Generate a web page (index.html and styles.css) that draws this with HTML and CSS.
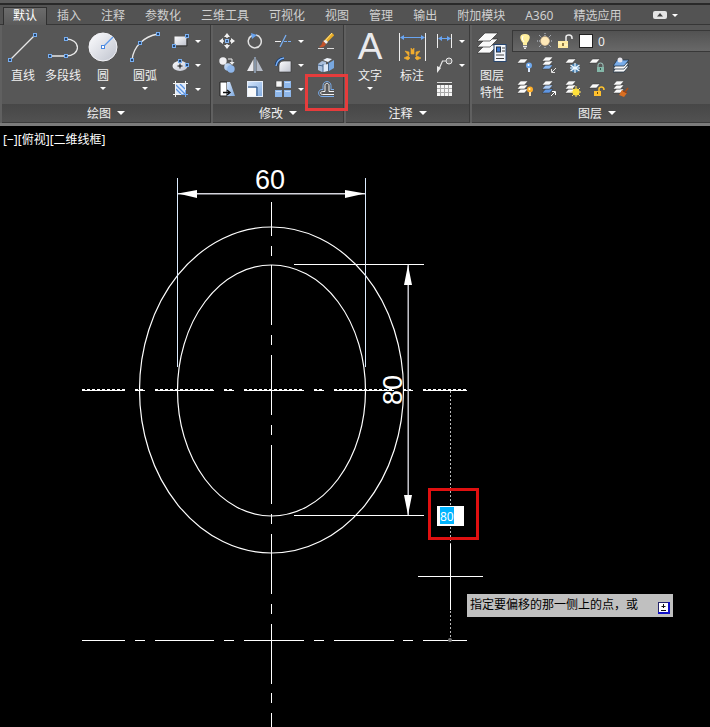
FILE: index.html
```html
<!DOCTYPE html>
<html lang="zh-CN">
<head>
<meta charset="utf-8">
<title>CAD</title>
<link rel="stylesheet" href="styles.css">
</head>
<body>
<svg class="defs" aria-hidden="true">
  <defs>
    <linearGradient id="metal" x1="0" y1="0" x2="1" y2="1"><stop offset="0" stop-color="#fdfdff"/><stop offset="1" stop-color="#bfc3ce"/></linearGradient>
    <linearGradient id="blue" x1="0" y1="0" x2="1" y2="1"><stop offset="0" stop-color="#d6e6fb"/><stop offset="1" stop-color="#7fa9de"/></linearGradient>
    <g id="grip"><rect x="-1.5" y="-1.5" width="3" height="3" fill="#24456f" stroke="#78aef0"/></g>
    <path id="sheet" d="M3.500 0H11L7.500 4H0Z" stroke="#333" stroke-width=".5"/>
    <g id="stack"><use href="#sheet" y="8"/><use href="#sheet" y="4"/><use href="#sheet"/></g>
  </defs>
</svg>

<header class="ribbon">
  <nav class="tabs">
    <button class="tab active">默认</button>
    <button class="tab">插入</button>
    <button class="tab">注释</button>
    <button class="tab">参数化</button>
    <button class="tab">三维工具</button>
    <button class="tab">可视化</button>
    <button class="tab">视图</button>
    <button class="tab">管理</button>
    <button class="tab">输出</button>
    <button class="tab">附加模块</button>
    <button class="tab">A360</button>
    <button class="tab">精选应用</button>
    <button class="collapse" aria-label="最小化">
      <svg width="14" height="8"><rect width="14" height="8" rx="2" fill="#e6e6e6"/><path d="M4 5.500 7 2l3 3.500Z" fill="#444"/></svg>
      <i class="caret"></i>
    </button>
  </nav>

  <div class="panels">
    <section class="panel draw">
      <div class="tools">
        <button class="big">
          <svg width="30" height="30"><path d="M2 28 27 3" stroke="#e8e8e8" stroke-width="1.300"/><use href="#grip" x="2" y="28"/><use href="#grip" x="27" y="3"/></svg>
          <span>直线</span>
        </button>
        <button class="big">
          <svg width="30" height="30"><path d="M2 24H18C25 24 29.500 20 29.500 15.500S25 7 18 7" fill="none" stroke="#e8e8e8" stroke-width="1.300"/><use href="#grip" x="2" y="24"/><use href="#grip" x="18" y="24"/><use href="#grip" x="18" y="7"/></svg>
          <span>多段线</span>
        </button>
        <button class="big">
          <svg width="30" height="30"><circle cx="15" cy="15" r="14" fill="url(#metal)" stroke="#f4f4f8"/><path d="M15 15 25 5" stroke="#5b97ea" stroke-width="1.300"/><rect x="13.500" y="13.500" width="3" height="3" fill="#fff" stroke="#4a88e0"/></svg>
          <span>圆</span><i class="caret"></i>
        </button>
        <button class="big">
          <svg width="30" height="30"><path d="M2 28Q3 18 10 11T28 2" fill="none" stroke="#e8e8e8" stroke-width="1.300"/><use href="#grip" x="2" y="28"/><use href="#grip" x="10" y="11"/><use href="#grip" x="28" y="2"/></svg>
          <span>圆弧</span><i class="caret"></i>
        </button>
        <div class="column">
          <button class="small" aria-label="矩形"><svg width="17" height="16"><rect x="2.500" y="3.500" width="12" height="9" fill="url(#metal)"/><path d="M3 13H15V6" fill="none" stroke="#333"/><use href="#grip" x="2" y="13"/><use href="#grip" x="15" y="3"/></svg><i class="caret"></i></button>
          <button class="small" aria-label="椭圆"><svg width="17" height="16"><ellipse cx="8" cy="9" rx="7.500" ry="5" fill="url(#metal)"/><path d="M5.500 9h5M8 6.500v5" stroke="#111"/><use href="#grip" x="8" y="4"/><use href="#grip" x="15" y="8"/></svg><i class="caret"></i></button>
          <button class="small" aria-label="图案填充"><svg width="17" height="16"><rect x="4" y="3" width="9" height="10" fill="#dce9fb"/><path d="m4 4 9 9M4 8l5 5M8 3l5 5" stroke="#5b93e0" stroke-width="1.300"/><path d="M1 2.500H16M1 13.500H16M3.500 0V16M13.500 0V16" stroke="#f2f2f2"/><path d="M9 13.500h7M13.500 9v7" stroke="#70a8f4"/></svg><i class="caret"></i></button>
        </div>
      </div>
      <button class="title">绘图<i class="caret wide"></i></button>
    </section>

    <section class="panel modify">
      <div class="tools grid">
        <button class="small" aria-label="移动"><svg width="16" height="16"><path d="M8 0 11 4H5ZM8 16 11 12H5ZM0 8 4 5V11ZM16 8 12 5V11Z" fill="#f2f2f2"/><path d="M8 3v2M8 11v2M3 8h2M11 8h2" stroke="#eee" stroke-width="1.500"/><rect x="6.500" y="6.500" width="3" height="3" fill="#395f92" stroke="#8dbaf2"/></svg></button>
        <button class="small" aria-label="旋转"><svg width="16" height="16"><path d="M5 2.500A6.500 6.500 0 1 0 9 2" fill="none" stroke="#e2e2e2" stroke-width="1.500"/><path d="M4 0 10 2 5 6Z" fill="#69a3ee"/></svg></button>
        <button class="small" aria-label="修剪"><svg width="17" height="16"><path d="M0 8.500H6" stroke="#eee"/><path d="M5 14 11 2" stroke="#79aff3" stroke-width="1.300"/><path d="M9 8.500h8" stroke="#79aff3" stroke-dasharray="3 1"/></svg><i class="caret"></i></button>
        <button class="small" aria-label="删除"><svg width="16" height="16"><path d="M0 15.500H6M9 15.500H16" stroke="#ddd"/><path d="M15 1 7 9" stroke="#e8ac27" stroke-width="3.500"/><path d="m14 0-7 8" stroke="#ffe38c"/><path d="m8 7 2 2-2 2-3-3Z" fill="#eee"/><path d="M5 8 8 11Q6 15 1 14Q4 12 5 8" fill="#c4532a"/></svg></button>

        <button class="small" aria-label="复制"><svg width="16" height="16"><circle cx="4" cy="4" r="3.700" fill="#f0f0f3"/><circle cx="9" cy="10" r="3.800" fill="url(#blue)"/><circle cx="12" cy="12" r="3.700" fill="#8eb6ea"/><path d="M9 2h4v4" fill="none" stroke="#eee"/><path d="M10.500 5h5L13 8Z" fill="#eee"/></svg></button>
        <button class="small" aria-label="镜像"><svg width="16" height="16"><path d="M6.500 2V14H0Z" fill="#e8e8ec"/><path d="M9.500 2V14H16Z" fill="#b4bac6"/><path d="M8 0V16" stroke="#b7d3f6"/></svg></button>
        <button class="small" aria-label="圆角"><svg width="17" height="16"><path d="M4 15V9Q4 4 9 4H16V15Z" fill="url(#metal)" stroke="#333" stroke-width=".6"/><path d="M1 9Q2 2 9 1" fill="none" stroke="#183d70" stroke-width="3"/><path d="M1 9Q2 2 9 1" fill="none" stroke="#7eb2f5" stroke-width="1.400"/></svg><i class="caret"></i></button>
        <button class="small" aria-label="分解"><svg width="16" height="16"><path d="M0 7 4 4 8 5V14L4 15 0 13Z" fill="#a9bfdc"/><path d="M5 3 9 1 14 2 10 5Z" fill="#eef4fc"/><path d="M5 8 10 7V14L5 15Z" fill="#dfe9f6"/><path d="m11 6 5-3V11l-5 3Z" fill="#78a7de"/><path d="M5 7v8M10.500 5v9M0 8l5 1" stroke="#44668e"/></svg></button>

        <button class="small" aria-label="拉伸"><svg width="16" height="16"><path d="M1 1H8V15H1Z" fill="#fff" stroke="#222"/><path d="M8 1h3l5 14H8Z" fill="url(#blue)"/><path d="M4 11.500h6M8 9l3 2.500L8 14" fill="none" stroke="#111" stroke-width="1.400"/></svg></button>
        <button class="small" aria-label="缩放"><svg width="16" height="16"><rect x=".5" y=".5" width="15" height="15" fill="url(#blue)" stroke="#e7eef8"/><path d="M1 6h9v9" fill="none" stroke="#294d7c"/><rect x="1" y="7" width="8" height="8" fill="#fafafa"/></svg></button>
        <button class="small" aria-label="阵列"><svg width="17" height="16"><rect x="1" y="0" width="6" height="6" fill="#f6f6f6" stroke="#333" stroke-width=".5"/><rect x="9" y="0" width="7" height="7" fill="#8fb8eb"/><rect x="0" y="9" width="7" height="7" fill="#8fb8eb"/><rect x="9" y="9" width="7" height="7" fill="#8fb8eb"/><path d="M10 1.500h5M1 10.500h5M10 10.500h5" stroke="#c7dcf7"/></svg><i class="caret"></i></button>
        <button class="small" aria-label="偏移"><svg width="16" height="16"><path d="M16 15.500H4C-.5 15.500-.5 8.500 4 8.500H5V4.500C5 -.7 13 -.7 13 4.500V8.500H16" fill="none" stroke="#78abea"/><path d="M16 13.500H4.500C2 13.500 2 10.500 4.500 10.500H7V4.500C7 1.700 11 1.700 11 4.500V10.500H16" fill="none" stroke="#f2f2f2"/></svg></button>
      </div>
      <button class="title">修改<i class="caret wide"></i></button>
    </section>

    <section class="panel annotate">
      <div class="tools">
        <button class="big"><b class="letter">A</b><span>文字</span><i class="caret"></i></button>
        <button class="big"><svg width="30" height="30"><path d="M2.500 1V29M28.500 1V29" stroke="#eee"/><path d="M4 5.500H27" stroke="#69a5f2"/><path d="M3 5.500 7 3V8ZM28 5.500 24 3V8Z" fill="#69a5f2"/><path d="m14 16 1.500 2L17 16V22H14ZM8 19l4 1v4ZM23 19l-4 1v4ZM7 26l4-2 2 2-2 2ZM24 26l-4-2-2 2 2 2Z" fill="#f2ad2e" stroke="#f2ad2e" stroke-width=".6"/></svg><span>标注</span></button>
        <div class="column">
          <button class="small" aria-label="线性"><svg width="17" height="16"><path d="M1.500 1V15M15.500 1V15" stroke="#eee"/><path d="M3 5.500H14" stroke="#69a5f2"/><path d="M2 5.500 6 3V8ZM15 5.500 11 3V8Z" fill="#69a5f2"/></svg><i class="caret"></i></button>
          <button class="small" aria-label="引线"><svg width="17" height="16"><circle cx="13" cy="4" r="3" fill="#777" stroke="#eee"/><path d="M10 4H6.500L3 12" fill="none" stroke="#e8e8e8" stroke-width="1.200"/><path d="M1 9 5 11 1 16Z" fill="#e8e8e8"/></svg><i class="caret"></i></button>
          <button class="small" aria-label="表格"><svg width="17" height="16"><rect x="1" y="1" width="15" height="14" fill="#f7f7f7"/><rect x="1" y="1" width="15" height="3" fill="#555"/><path d="M1 1.500h15" stroke="#ddd"/><path d="M1 7.500H16M1 11.500H16M4.500 4V15M8.500 4V15M12.500 4V15" stroke="#aaa"/></svg></button>
        </div>
      </div>
      <button class="title">注释<i class="caret wide"></i></button>
    </section>

    <section class="panel layers">
      <div class="tools">
        <button class="big"><svg width="30" height="30"><g fill="#fafafa" stroke="#333" stroke-width=".7"><path d="M8 13H21L13 21H0Z"/><path d="M8 7H21L13 15H0Z"/><path d="M8 1H21L13 9H0Z"/></g><rect x="17" y="12.500" width="12" height="17" fill="#f4f7fc" stroke="#28466e"/><rect x="19.500" y="15" width="4" height="5" fill="#3975cf" stroke="#234"/><path d="M25 16h3M25 19h3M19 23h8M19 26.500h8" stroke="#444"/></svg><span>图层<br>特性</span></button>
        <div class="layer-tools">
          <div class="layer-box">
            <svg width="16" height="16"><path d="M8 1C1 1 3 7 6 10V12H10V10C13 7 15 1 8 1" fill="#ffef9d"/><path d="M6 3Q4 6 7 9" fill="none" stroke="#fff"/><path d="M6 13.500h4M7 15.500h2" stroke="#e8e8e8" stroke-width="1.500"/></svg>
            <svg width="16" height="16"><path d="M8 0V16M0 8H16M2 2 14 14M14 2 2 14" stroke="#c8ced8" stroke-dasharray="1 1"/><circle cx="8" cy="8" r="4.500" fill="#ffe9b8" stroke="#c7a77a" stroke-width=".5"/></svg>
            <svg width="16" height="16"><path d="M9 8V4Q9 2 12 2T15 5V6" fill="none" stroke="#eee" stroke-width="1.500"/><rect x="1" y="8" width="10" height="7" fill="#ffeaa0"/><path d="M6 10v3" stroke="#6b552b" stroke-width="1.500"/><path d="M1 10H5M7 12h4" stroke="#fff8cf"/></svg>
            <i class="swatch"></i>
            <select aria-label="图层"><option>0</option></select>
          </div>
          <div class="layer-grid">
            <button class="small" aria-label="关"><svg width="16" height="16" fill="#fafafa"><use href="#sheet" y="2"/><circle cx="12" cy="8.500" r="3" fill="#6fa9ee"/><circle cx="11.500" cy="8" r="1" fill="#fff"/><path d="M12 11v4" stroke="#dceaff" stroke-width="2"/></svg></button>
            <button class="small" aria-label="隔离"><svg width="16" height="16" fill="#fafafa"><use href="#sheet" x="1" y="8" fill="#83b4f0"/><use href="#sheet" x="1" y="4"/><use href="#sheet" x="1"/><path d="m15 11-4 4M10.500 12v3.500H14" fill="none" stroke="#e2e2e2"/></svg></button>
            <button class="small" aria-label="冻结"><svg width="16" height="16" fill="#fafafa"><use href="#sheet" y="2"/><circle cx="10" cy="11" r="4.500" fill="#477eae"/><path d="M10 6v10M5.500 8l9 6M14.500 8l-9 6M5 11H15" stroke="#eef8ff" stroke-width="1.200"/></svg></button>
            <button class="small" aria-label="锁定"><svg width="16" height="16" fill="#fafafa"><use href="#sheet" y="2"/><path d="M9 11V8Q9 6 11.500 6T14 8v3" fill="none" stroke="#a3cdc4"/><rect x="8" y="10" width="7" height="5" fill="#84b7a8"/><path d="M11.500 11v2" stroke="#315d50"/></svg></button>
            <button class="small" aria-label="置为当前"><svg width="16" height="16" fill="#fafafa"><g stroke="#234" stroke-width=".8"><path d="M4 9H16L11 15H0Z"/><path d="M4 6H16L11 12H0Z"/><path d="M4 3H16L11 9H0Z" fill="#78ace9"/></g><circle cx="7" cy="3" r="2.500" fill="#e8e8f0"/></svg></button>
            <button class="small" aria-label="打开"><svg width="16" height="16" fill="#fafafa"><use href="#stack"/><circle cx="13" cy="8.500" r="3" fill="#ffae28"/><circle cx="12.500" cy="8" r="1" fill="#fff8bd"/><path d="M13 11v4" stroke="#ffe2ad" stroke-width="2"/></svg></button>
            <button class="small" aria-label="取消隔离"><svg width="16" height="16" fill="#fafafa"><use href="#sheet" x="1" y="8" fill="#5f96e3"/><use href="#sheet" x="1" y="4" fill="#a9c9f3"/><use href="#sheet" x="1"/><path d="m10 15 4-4M11 10.500h3.500V14" fill="none" stroke="#fff"/></svg></button>
            <button class="small" aria-label="解冻"><svg width="16" height="16" fill="#fafafa"><use href="#stack"/><path d="M11 5V16.500M5.500 11H16.500M7 7l8 8M15 7l-8 8" stroke="#ffe069"/><circle cx="11" cy="11" r="3.500" fill="#ffe13a"/></svg></button>
            <button class="small" aria-label="解锁"><svg width="16" height="16" fill="#fafafa"><use href="#sheet" y="3"/><path d="M10 11V8Q10 6 12.500 6T15 9" fill="none" stroke="#ffc32d" stroke-width="1.500"/><rect x="5" y="10" width="7" height="5" fill="#ffc02d"/><path d="M8.500 11v2" stroke="#704a00"/></svg></button>
            <button class="small" aria-label="匹配图层"><svg width="16" height="16" fill="#fafafa"><use href="#stack"/><path d="m15 7-3 4" stroke="#a84c16" stroke-width="1.500"/><path d="m9 9 5 3-3 4-5-2Z" fill="#d96f22"/><path d="m10 10 4 2" stroke="#8f3b14"/></svg></button>
          </div>
        </div>
      </div>
      <button class="title">图层<i class="caret wide"></i></button>
    </section>
  </div>
  <div class="mark offset-mark"></div>
</header>

<main class="canvas">
  <p class="view-label">[−][俯视][二维线框]</p>
  <svg class="drawing">
    <g transform="translate(0 -126)" fill="none" stroke="#fff">
      <g stroke-width="1.200">
        <ellipse cx="271.500" cy="390" rx="132" ry="163"/>
        <ellipse cx="271.500" cy="390.500" rx="94" ry="125.500"/>
      </g>
      <path d="M271.500 202V236M271.500 246V256M271.500 265V325M271.500 335V345M271.500 355V415M271.500 425V435M271.500 445V504M271.500 514V524M271.500 534V594M271.500 604V614M271.500 624V684M271.500 693V703M271.500 713V900"/>
      <path d="M82 390.500H125M135 390.500H145M155 390.500H214M224 390.500H234M244 390.500H304M314 390.500H324M334 390.500H394M403 390.500H413M423 390.500H467"/>
      <path d="M82 389.500H125M135 389.500H145M155 389.500H214M224 389.500H234M244 389.500H304M314 389.500H324M334 389.500H394M403 389.500H413M423 389.500H467" stroke-dasharray="3 2"/>
      <path d="M82 640.500H125M135 640.500H145M155 640.500H214M224 640.500H234M244 640.500H304M314 640.500H324M334 640.500H394M403 640.500H413M423 640.500H467"/>
      <path d="M177.500 178V367M365.500 178V367" stroke="#dcecff"/>
      <path d="M294 264.500H424M294 515.500H424"/>
      <path d="M178 193.700H365M408.200 265V515" stroke="#d4d4dc" stroke-width="1.400"/>
      <path d="M178 193.500 197 190V198ZM365 193.500 345 190V198ZM408 265 404 285H412ZM408 515 404 495H412Z" fill="#fff" stroke="none"/>
      <path d="M450.500 391V544M450.500 611V640" stroke="#bbb" stroke-dasharray="2 2"/>
      <path d="M450.500 544V610M418 576.500H483"/>
      <circle cx="450" cy="640" r="2" fill="#777" stroke="none"/>
      <g class="dim-text" fill="#fff" stroke="none"><text x="270" y="189">60</text><text transform="translate(402 390) rotate(-90)">80</text></g>
    </g>
  </svg>
  <div class="mark distance"><input aria-label="偏移距离" value="80"></div>
  <div class="prompt">指定要偏移的那一侧上的点，或<svg width="12" height="12"><rect x=".5" y=".5" width="10" height="10" fill="#fff" stroke="#24246c"/><path d="M11 0V11H0" fill="none" stroke="#1010c8" stroke-width="2"/><path d="M5.500 2v4M3.500 4.500h4M3 8.500h5" stroke="#111"/></svg></div>
</main>
</body>
</html>
```
FILE: styles.css
```css
* { box-sizing: border-box; }

body {
  margin: 0;
  min-height: 100vh;
  display: flex;
  flex-direction: column;
  background: #000;
  color: #f0f0f0;
  font: 12px/17px "Noto Sans", "Noto Sans CJK SC", sans-serif;
}

button {
  margin: 0;
  padding: 0;
  border: 0;
  background: none;
  color: inherit;
  font: inherit;
}

svg { display: block; flex: none; }
.defs { position: absolute; width: 0; height: 0; }

.caret {
  flex: none;
  border: solid transparent;
  border-width: 3px 3px 0;
  border-top-color: #fff;
}
.caret.wide { border-width: 4px 4px 0; border-top-color: #fff; }

.ribbon {
  position: relative;
  background: #535353;
  border-top: 3px solid #5b5b5b;
  border-bottom: 3px solid #7b7b7b;
  overflow: hidden;
}

.tabs {
  display: flex;
  height: 22px;
  padding: 2px 0 0 3px;
  border-top: 2px solid #292929;
  border-bottom: 1px solid #363636;
}
.tab {
  flex: none;
  height: 17px;
  padding: 0 10px;
  line-height: 17px;
  color: #d0d0d0;
}
.tab.active {
  height: 19px;
  border: solid #303030;
  border-width: 1px 1px 0;
  padding: 0 9px 3px;
  background: linear-gradient(#6c6c6c, #595959);
  line-height: 15px;
  color: #fff;
}
.collapse {
  display: flex;
  align-items: center;
  gap: 5px;
  height: 16px;
  margin-left: 22px;
}

.panels { display: flex; gap: 2px; padding-left: 2px; background: #606060; }
.panel {
  display: flex;
  flex-direction: column;
  flex: none;
  border: solid #3b3b3b;
  border-width: 0 1px 1px 0;
  background: #575757;
}
.draw { width: 209px; }
.modify { width: 131px; }
.annotate { width: 124px; }
.layers { flex: 1; min-width: 0; border-right: 0; }

.tools { display: flex; height: 79px; }
.title {
  display: flex;
  align-items: center;
  justify-content: center;
  gap: 6px;
  height: 18px;
  background: linear-gradient(#474747, #515151);
}
.layers .title { padding-left: 12px; }

.big {
  display: flex;
  flex: none;
  flex-direction: column;
  align-items: center;
  width: 40px;
  padding-top: 7px;
}
.big span { margin: 5px 0 3px; white-space: nowrap; }
.letter {
  height: 30px;
  color: #e9e9ec;
  font: 400 37px/30px "Liberation Sans", sans-serif;
}
.draw .big:nth-child(4) { width: 44px; }
.draw .tools { padding-left: 1px; }

.column { display: flex; flex-direction: column; padding: 4px 0 0 5px; }
.small { display: flex; align-items: center; gap: 6px; height: 24px; }

.grid {
  display: grid;
  grid-template: repeat(3, 24px) / 28px 28px 43px 16px;
  padding: 4px 0 0 6px;
}

.annotate .tools { padding-left: 3px; }
.annotate .big { width: 42px; }
.annotate .column { padding-left: 3px; }

.layers .big { width: 40px; }
.layer-tools { flex: 1; min-width: 0; padding-top: 5px; }
.layer-box {
  display: flex;
  align-items: center;
  gap: 4px;
  height: 22px;
  padding-left: 4px;
  border: 1px solid #383838;
  border-right: 0;
  background: linear-gradient(#525252, #686868);
}
.swatch { width: 14px; height: 14px; margin: 0 1px 0 2px; border: 1px solid #222; background: #fff; }
.layer-box select {
  flex: 1;
  min-width: 0;
  padding: 0;
  border: 0;
  appearance: none;
  background: none;
  color: #eee;
  font: inherit;
}
.layer-grid { display: grid; grid-template: repeat(2, 24px) / repeat(5, 24px); padding: 1px 0 0 5px; }

.mark { position: absolute; border: 3px solid #e63c3c; }
.offset-mark { left: 305px; top: 71px; width: 43px; height: 37px; pointer-events: none; }

.canvas { position: relative; flex: 1; min-height: 540px; overflow: hidden; }
.view-label { margin: 5px 3px; color: #fff; }
.drawing { position: absolute; inset: 0; width: 100%; height: 100%; }
.dim-text { font: 27px "Liberation Sans", sans-serif; text-anchor: middle; }

.distance {
  left: 428px;
  top: 362px;
  width: 51px;
  height: 52px;
  padding: 15px 6px;
  border-color: #e01010;
}
.distance input {
  display: block;
  width: 27px;
  height: 20px;
  padding: 0 0 0 3px;
  border: 0;
  background: linear-gradient(#00b4ff, #00b4ff) 3px 1px / 14px 17px no-repeat #fff;
  color: #fff;
  font: 12px "Noto Sans", sans-serif;
}
.prompt {
  position: absolute;
  left: 467px;
  top: 468px;
  display: flex;
  justify-content: space-between;
  width: 206px;
  height: 23px;
  padding: 2px 3px;
  background: #c0c0c0;
  color: #000;
  white-space: nowrap;
}
.prompt svg { margin-top: 6px; }
```
